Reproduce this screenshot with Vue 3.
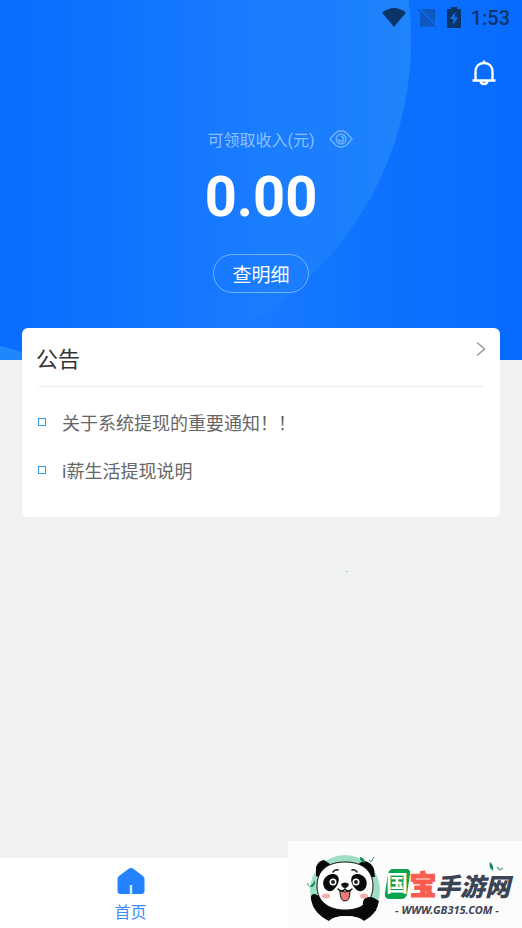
<template>
  <div class="page">
    <header class="hero">
      <svg class="hero-bg" viewBox="0 0 522 360" preserveAspectRatio="none" aria-hidden="true">
        <defs>
          <linearGradient id="base" x1="0" x2="1" y1="0" y2="0">
            <stop offset="0" stop-color="#086cff" />
            <stop offset="0.5" stop-color="#187aff" />
            <stop offset="0.78" stop-color="#0c70ff" />
            <stop offset="1" stop-color="#076bff" />
          </linearGradient>
          <linearGradient id="disc" gradientUnits="userSpaceOnUse" x1="0" x2="411" y1="0" y2="0">
            <stop offset="0" stop-color="#2085fb" stop-opacity="0" />
            <stop offset="0.55" stop-color="#2085fb" stop-opacity="0.1" />
            <stop offset="1" stop-color="#2085fb" />
          </linearGradient>
        </defs>
        <rect width="522" height="360" fill="url(#base)" />
        <circle cx="83" cy="40" r="328" fill="url(#disc)" />
        <path d="M0 346Q14 349 24 353L48 360H0Z" fill="#1f86fc" />
      </svg>

      <div class="status">
        <svg width="26" height="22" viewBox="0 0 26 22" aria-hidden="true">
          <path d="M1 5.500Q13-3.500 25 5.500L13 20Z" fill="#0b3468" />
        </svg>
        <svg width="20" height="22" viewBox="0 0 20 22" aria-hidden="true">
          <path d="M5 2H18V16.500L4.500 2.500ZM3 5L17 19.500H3Z" fill="#0e58bd" />
          <path d="M1 2L18.500 20" stroke="#0e58bd" stroke-width="1.500" />
        </svg>
        <svg width="14" height="22" viewBox="0 0 14 22" aria-hidden="true">
          <path d="M4 0H10V2H13Q14 2 14 3V20Q14 21 13 21H1Q0 21 0 20V3Q0 2 1 2H4Z" fill="#0b3468" />
          <path d="M8.500 4.500L3 12H6.500L5.500 18.500L11 10.500H7.500Z" fill="#1470ee" />
        </svg>
        <time>{{ time }}</time>
      </div>

      <div class="tools">
        <button class="icon-btn" type="button" aria-label="消息">
          <svg width="24" height="26" viewBox="0 0 24 26" fill="none" stroke="#fff" stroke-width="2.400">
            <path d="M12 0.500V3M3.500 20V12C3.500 6.500 7 3 12 3S20.500 6.500 20.500 12V20M0.500 20.500H23.500" />
            <path d="M8.500 21C9 25 15 25 15.500 21" />
          </svg>
        </button>
      </div>

      <div class="balance">
        <div class="label-row">
          <span class="label">可领取收入(元)</span>
          <button class="icon-btn eye" type="button" aria-label="显示或隐藏金额" @click="hidden = !hidden">
            <svg width="24" height="20" viewBox="0 0 24 20" fill="none" stroke="#74b2ff" stroke-width="1.400">
              <path d="M1 10L6.500 4Q12-0.500 17.500 4L23 10L17.500 16Q12 20.500 6.500 16Z" />
              <circle cx="12" cy="10" r="4.800" />
              <path d="M12 7.500A2.500 2.500 0 1 1 9.500 10" />
            </svg>
          </button>
        </div>
        <strong class="amount">{{ hidden ? '****' : amount }}</strong>
        <button class="detail" type="button">查明细</button>
      </div>
    </header>

    <main class="main">
      <section class="card">
        <div class="card-head">
          <h2>公告</h2>
          <a class="more" href="#" aria-label="更多公告">
            <svg width="10" height="16" viewBox="0 0 10 16" fill="none" stroke="#999" stroke-width="1.500">
              <path d="M1 1.500L8.500 8L1 14.500" />
            </svg>
          </a>
        </div>
        <ul class="list">
          <li v-for="item in notices" :key="item">
            <a href="#">{{ item }}</a>
          </li>
        </ul>
      </section>
      <i class="speck"></i>
    </main>

    <nav class="tabbar">
      <a class="tab" href="#">
        <svg width="28" height="28" viewBox="0 0 28 28" aria-hidden="true">
          <path d="M12 1.500Q14 0.300 16 1.500L26 9Q27.500 10.200 27.500 12V24Q27.500 27 24.500 27H3.500Q0.500 27 0.500 24V12Q0.500 10.200 2 9Z" fill="#2482ff" />
          <path d="M14 18V27" stroke="#d5e8ff" stroke-width="2.400" />
        </svg>
        <span>首页</span>
      </a>
    </nav>

    <aside class="brand">
      <svg width="234" height="87" viewBox="0 0 234 87" role="img" aria-label="国宝手游网">
        <circle cx="57" cy="49" r="35" fill="#9edfc3" />
        <path d="M23 58Q22 53 27 53L33 56L42 66H72L76 59Q80 54 86 57L91 60Q89 73 76 80Q70 75 58 75T41 80Q25 72 23 58Z" fill="#090909" />
        <path d="M76 80Q70 75 58 75T41 80V87H76Z" fill="#fcfcfc" />
        <path d="M28 35L28 26Q30 20 36 19L42 23L33 37Z" fill="#090909" />
        <path d="M71 22L77 20Q84 22 86 28L87 36L80 36Z" fill="#090909" />
        <path d="M29 45C29 29 40 21 57 21S85 29 85 45C85 61 73 69 57 69S29 61 29 45Z" fill="#fff" stroke="#111" />
        <path d="M75 65Q74 58 79 56Q86 55 89 62L88 70L78 72Z" fill="#090909" />
        <path d="M36 46C33 39 39 32 46 33C52 34 52 41 48 46C44 52 38 51 36 46Z" fill="#090909" />
        <path d="M78 46C81 39 75 32 68 33C62 34 62 41 66 46C70 52 76 51 78 46Z" fill="#090909" />
        <circle cx="45" cy="41" r="3.500" fill="#fff" />
        <circle cx="45" cy="41" r="2" fill="#222" />
        <circle cx="68" cy="41" r="3.500" fill="#fff" />
        <circle cx="68" cy="41" r="2" fill="#222" />
        <path d="M45 31Q47 28 50 29M64 29Q67 28 69 31" fill="none" stroke="#111" stroke-width="1.500" stroke-linecap="round" />
        <path d="M53 43Q57 40 61 43Q60 47 57 47T53 43Z" fill="#111" />
        <path d="M50 48Q54 52 57 48Q60 52 64 48" fill="none" stroke="#111" stroke-width="1.300" stroke-linecap="round" />
        <path d="M52 50Q57 52 62 50Q62 60 57 60T52 50Z" fill="#ef7a76" stroke="#111" />
        <ellipse cx="38" cy="55" rx="4" ry="2.500" fill="#f7aaa8" />
        <ellipse cx="76" cy="55" rx="4" ry="2.500" fill="#f7aaa8" />
        <path d="M21 46Q26 42 27 39Q28 47 21 46ZM72 16Q77 17 77 22Q71 20 72 16Z" fill="#198754" />
        <path d="M19 42L21 45M81 19L83 21L86 16" fill="none" stroke="#3d9a70" />
        <path d="M202 21Q206 24 205 30Q200 26 202 21Z" fill="#198754" />
        <path d="M209 26L212 29L215 27" fill="none" stroke="#55a882" stroke-width="1.300" />

        <path d="M105 28H118Q123 28 122 33L119 53Q118 58 113 58H102Q96 58 97 52L100 33Q101 28 105 28Z" fill="#07a34e" />
        <text class="zh guo" x="109" y="50" text-anchor="middle">国</text>
        <text class="zh bao" x="135" y="54" text-anchor="middle">宝</text>
        <text class="zh name" x="147" y="55">手游网</text>
        <text class="url" x="107" y="73">- WWW.GB315.COM -</text>
      </svg>
    </aside>
  </div>
</template>

<script setup>
import { ref } from "vue"

const time = ref("1:53")
const amount = ref("0.00")
const hidden = ref(false)

const notices = ["关于系统提现的重要通知！！", "i薪生活提现说明"]
</script>

<style>
body {
  margin: 0;
  background: #f1f1f1;
}
</style>

<style scoped>
.page {
  position: relative;
  display: flex;
  flex-direction: column;
  min-height: 100vh;
  background: #f1f1f1;
  font-family: Roboto, "Noto Sans CJK SC", sans-serif;
}

button {
  padding: 0;
  border: 0;
  background: none;
  font-family: inherit;
  cursor: pointer;
}

a {
  color: inherit;
  text-decoration: none;
}

svg {
  display: block;
}

.hero {
  position: relative;
  padding-bottom: 67px;
  color: #fff;
}

.hero-bg {
  position: absolute;
  inset: 0;
  width: 100%;
  height: 100%;
}

.status,
.tools,
.balance {
  position: relative;
}

.status {
  display: flex;
  align-items: center;
  justify-content: flex-end;
  gap: 10px;
  height: 36px;
  padding-right: 12px;
  color: #0b3468;
}

.status time {
  font-size: 20px;
  font-weight: 500;
}

.tools {
  display: flex;
  justify-content: flex-end;
  padding: 24px 26px 0;
}

.balance {
  display: flex;
  flex-direction: column;
  align-items: center;
  padding-top: 41px;
}

.label-row {
  display: grid;
  grid-template-columns: 1fr auto 1fr;
  align-items: center;
  width: 100%;
  height: 24px;
}

.label {
  grid-column: 2;
  color: #8cc0ff;
  font-size: 16px;
}

.eye {
  justify-self: start;
  margin-left: 14px;
}

.amount {
  margin-top: 14px;
  font-size: 56px;
  font-weight: 700;
  line-height: 64px;
}

.detail {
  height: 39px;
  margin-top: 25px;
  padding: 0 18px;
  border: 1px solid #76b2ff;
  border-radius: 20px;
  color: #fff;
  font-size: 19px;
}

.main {
  position: relative;
  padding: 0 22px;
}

.card {
  position: relative;
  margin-top: -32px;
  padding: 0 14px 23px;
  border-radius: 6px;
  background: #fff;
}

.card-head {
  display: flex;
  align-items: center;
  justify-content: space-between;
  height: 58px;
}

.card-head h2 {
  margin: 0;
  color: #333;
  font-size: 22px;
  font-weight: 400;
}

.more {
  padding-bottom: 16px;
}

.list {
  margin: 0 2px;
  padding: 11px 0 0;
  border-top: 1px solid #eee;
  list-style: none;
}

.list li {
  display: flex;
  align-items: center;
  gap: 16px;
  height: 48px;
  color: #666;
  font-size: 18px;
}

.list li::before {
  content: "";
  width: 6px;
  height: 6px;
  border: 1px solid #2f9bf0;
}

.speck {
  position: absolute;
  top: 211px;
  left: 346px;
  width: 1px;
  height: 1px;
  background: #2fc79a;
}

.tabbar {
  display: grid;
  grid-template-columns: 1fr 1fr;
  height: 70px;
  margin-top: auto;
  background: #fff;
}

.tab {
  display: flex;
  flex-direction: column;
  align-items: center;
  gap: 6px;
  padding-top: 9px;
  color: #3d8bfa;
  font-size: 16px;
  line-height: 24px;
}

.brand {
  position: absolute;
  right: 0;
  bottom: 0;
  background: #fcfcfc;
}

.zh {
  font-family: "Noto Sans CJK SC", sans-serif;
  font-weight: 900;
}

.guo {
  fill: #fff;
  font-size: 22px;
  font-weight: 700;
}

.bao {
  fill: #f95c50;
  stroke: #f95c50;
  stroke-width: 1px;
  font-size: 27px;
}

.name {
  fill: #3b4354;
  font-size: 25px;
  font-style: italic;
}

.url {
  fill: #3b4354;
  font-family: "Noto Sans", sans-serif;
  font-size: 11px;
  font-weight: 700;
  font-style: italic;
}
</style>
